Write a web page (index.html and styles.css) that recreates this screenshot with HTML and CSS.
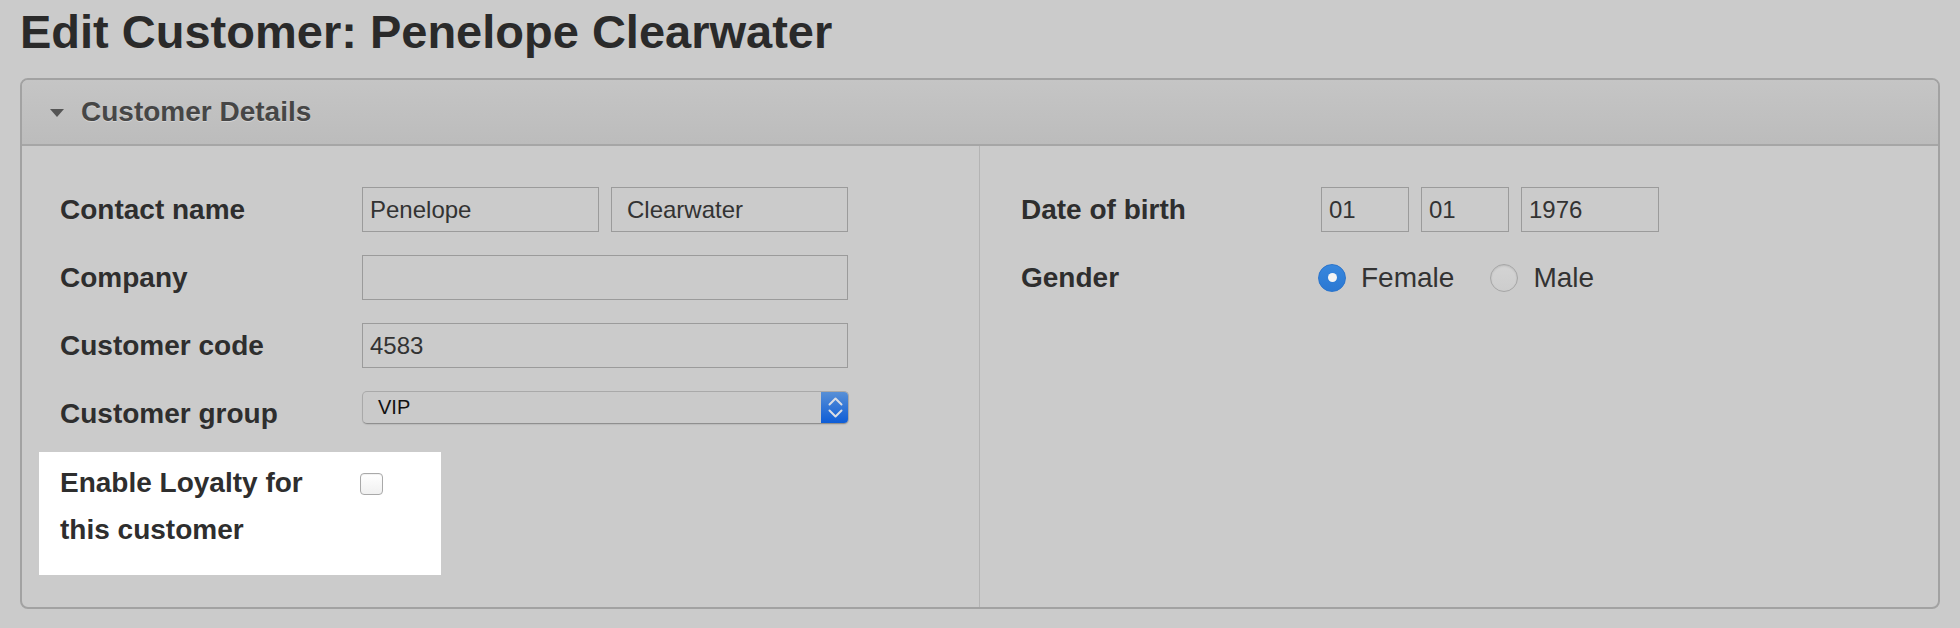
FILE: index.html
```html
<!DOCTYPE html>
<html lang="en">
<head>
<meta charset="utf-8">
<title>Edit Customer: Penelope Clearwater</title>
<link rel="stylesheet" href="styles.css">
</head>
<body>
  <h1 class="page-title">Edit Customer: Penelope Clearwater</h1>
  <section class="panel">
    <header class="panel-head">
      <span class="caret"></span>
      <span class="panel-title">Customer Details</span>
    </header>
    <div class="panel-body">
      <div class="col col-left">
        <div class="row">
          <label class="lbl">Contact name</label>
          <div class="fields">
            <input class="txt w237" type="text" value="Penelope">
            <input class="txt w237 pad-wide" type="text" value="Clearwater">
          </div>
        </div>
        <div class="row">
          <label class="lbl">Company</label>
          <div class="fields">
            <input class="txt w486" type="text" value="">
          </div>
        </div>
        <div class="row">
          <label class="lbl">Customer code</label>
          <div class="fields">
            <input class="txt w486" type="text" value="4583">
          </div>
        </div>
        <div class="row row-select">
          <label class="lbl">Customer group</label>
          <div class="fields fields-top">
            <div class="select">
              <span class="select-value">VIP</span>
              <span class="select-btn">
                <svg width="28" height="33" viewBox="0 0 28 33">
                  <polyline points="8.5,13.5 14.5,7.5 20.5,13.5" fill="none" stroke="#d9dde4" stroke-width="2" stroke-linecap="round" stroke-linejoin="round"/>
                  <polyline points="8.5,19.5 14.5,25.5 20.5,19.5" fill="none" stroke="#d9dde4" stroke-width="2" stroke-linecap="round" stroke-linejoin="round"/>
                </svg>
              </span>
            </div>
          </div>
        </div>
        <div class="row row-loyalty">
          <label class="lbl lbl-wrap">Enable Loyalty for this customer</label>
          <span class="checkbox"></span>
        </div>
      </div>
      <div class="col col-right">
        <div class="row row-right">
          <label class="lbl">Date of birth</label>
          <div class="fields">
            <input class="txt w88" type="text" value="01">
            <input class="txt w88" type="text" value="01">
            <input class="txt w138" type="text" value="1976">
          </div>
        </div>
        <div class="row row-right">
          <label class="lbl">Gender</label>
          <div class="fields radios">
            <span class="radio-item"><span class="radio radio-on"></span><span class="radio-text">Female</span></span>
            <span class="radio-item"><span class="radio"></span><span class="radio-text">Male</span></span>
          </div>
        </div>
      </div>
    </div>
  </section>
</body>
</html>
```

FILE: styles.css
```css
html, body {
  margin: 0;
  padding: 0;
}
body {
  background: #cbcbcb;
  font-family: "Liberation Sans", Arial, Helvetica, sans-serif;
  color: #2e2e2e;
  width: 1960px;
  height: 628px;
  overflow: hidden;
}
.page-title {
  margin: 4px 0 0 20px;
  font-size: 47px;
  line-height: 56px;
  font-weight: bold;
  color: #2a2a2a;
  letter-spacing: 0;
}
.panel {
  margin: 18px 0 0 20px;
  width: 1920px;
  height: 531px;
  box-sizing: border-box;
  border: 2px solid #a2a2a2;
  border-radius: 8px;
  overflow: hidden;
  display: flex;
  flex-direction: column;
}
.panel-head {
  height: 64px;
  border-bottom: 2px solid #a6a6a6;
  background: linear-gradient(#c5c5c5, #bcbcbc);
  display: flex;
  align-items: center;
  padding-left: 28px;
  gap: 17px;
  flex: none;
}
.caret {
  width: 0;
  height: 0;
  border-left: 7.5px solid transparent;
  border-right: 7.5px solid transparent;
  border-top: 8px solid #555;
  margin-top: 1px;
}
.panel-title {
  font-size: 28px;
  font-weight: bold;
  color: #464646;
  text-shadow: 0 1px 0 rgba(255, 255, 255, 0.35);
}
.panel-body {
  flex: 1;
  display: grid;
  grid-template-columns: 958px 958px;
}
.col {
  display: flex;
  flex-direction: column;
  align-items: flex-start;
  padding-top: 41px;
}
.col-left {
  border-right: 1px solid #b4b4b4;
  padding-left: 17px;
}
.col-right {
  padding-left: 20px;
}
.row {
  display: grid;
  grid-template-columns: 302px auto;
  align-items: center;
  min-height: 45px;
  padding-left: 21px;
  margin-bottom: 23px;
}
.row-right {
  grid-template-columns: 300px auto;
}
.row-select {
  margin-bottom: 16px;
}
.lbl {
  font-size: 28px;
  font-weight: bold;
  color: #2e2e2e;
  padding-right: 16px;
}
.fields {
  display: flex;
  gap: 12px;
  align-items: center;
}
.fields-top {
  align-self: start;
}
.txt {
  box-sizing: border-box;
  height: 45px;
  margin: 0;
  border: 1px solid #9b9b9b;
  background: transparent;
  font-family: "Liberation Sans", Arial, Helvetica, sans-serif;
  font-size: 24px;
  color: #333;
  padding: 0 0 0 7px;
  outline: none;
}
.pad-wide {
  padding-left: 15px;
}
.w237 { width: 237px; }
.w486 { width: 486px; }
.w88 { width: 88px; }
.w138 { width: 138px; }

.select {
  box-sizing: border-box;
  width: 487px;
  height: 33px;
  border: 1px solid #a9a9a9;
  border-bottom-color: #8f8f8f;
  border-radius: 5px;
  background: #cacaca;
  box-shadow: 0 1px 1px rgba(0, 0, 0, 0.08);
  display: flex;
  align-items: center;
  justify-content: space-between;
  overflow: hidden;
}
.select-value {
  padding-left: 15px;
  font-size: 20px;
  color: #111;
}
.select-btn {
  width: 28px;
  height: 33px;
  margin-top: -1px;
  margin-right: -1px;
  background: linear-gradient(#5a91d6, #0b5bd7);
  display: flex;
}

.row-loyalty {
  background: #fff;
  width: 402px;
  box-sizing: border-box;
  grid-template-columns: 300px 23px;
  align-items: start;
  padding: 7px 0 22px 21px;
  margin-bottom: 0;
}
.lbl-wrap {
  line-height: 47px;
}
.checkbox {
  width: 23px;
  height: 22px;
  box-sizing: border-box;
  margin-top: 14px;
  border: 1px solid #a9a9a9;
  border-radius: 4px;
  background: linear-gradient(#ffffff, #f0f0f0);
  box-shadow: inset 0 1px 1px rgba(0, 0, 0, 0.06);
}

.radios {
  gap: 36px;
  margin-left: -3px;
}
.radio-item {
  display: flex;
  align-items: center;
  gap: 15px;
}
.radio {
  width: 28px;
  height: 28px;
  box-sizing: border-box;
  border-radius: 50%;
  border: 1px solid #a6a6a6;
  background: linear-gradient(#d4d4d4, #cdcdcd);
  box-shadow: inset 0 1px 2px rgba(0, 0, 0, 0.12);
  display: flex;
  align-items: center;
  justify-content: center;
}
.radio-on {
  border-color: #2a74cc;
  background: linear-gradient(#3887dd, #2a78d3);
  box-shadow: none;
}
.radio-on::after {
  content: "";
  width: 9px;
  height: 9px;
  border-radius: 50%;
  background: #f4f4f4;
}
.radio-text {
  font-size: 28px;
  color: #333;
}
```
